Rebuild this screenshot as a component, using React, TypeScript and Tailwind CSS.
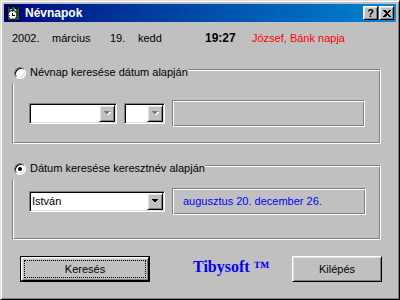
import React from 'react';

const raised =
  'border border-t-white border-l-white border-b-black border-r-black shadow-[inset_1px_1px_0_#dfdfdf,inset_-1px_-1px_0_#808080]';
const sunken =
  'border border-t-[#808080] border-l-[#808080] border-b-white border-r-white shadow-[inset_1px_1px_0_#000,inset_-1px_-1px_0_#dfdfdf]';
const etched =
  'border border-t-[#808080] border-l-[#808080] border-b-white border-r-white shadow-[inset_1px_1px_0_#fff,inset_-1px_-1px_0_#808080]';

const AppIcon = () => (
  <svg width="16" height="16" viewBox="0 0 16 16" shapeRendering="crispEdges">
    <path d="M2 1h2v2h2V1h4v2h2V1h2v14H2z" fill="#0b5f55" stroke="#000" strokeWidth="1" />
    <rect x="5" y="4" width="2" height="2" fill="#7fd0c0" />
    <rect x="9" y="4" width="2" height="2" fill="#7fd0c0" />
    <circle cx="7.5" cy="10" r="4.5" fill="#fff" stroke="#000" strokeWidth="1" shapeRendering="auto" />
    <rect x="7" y="6" width="1" height="1" fill="#e00000" />
    <rect x="7" y="13" width="1" height="1" fill="#e00000" />
    <rect x="4" y="10" width="1" height="1" fill="#e00000" />
    <rect x="11" y="10" width="1" height="1" fill="#e00000" />
    <rect x="7" y="8" width="1" height="3" fill="#000" />
    <rect x="8" y="10" width="2" height="1" fill="#000" />
  </svg>
);

const Arrow = ({ disabled }: { disabled?: boolean }) => (
  <div className={`w-[16px] h-full flex items-center justify-center ${raised} bg-[#c0c0c0]`}>
    <svg width="8" height="5" viewBox="0 0 8 5" shapeRendering="crispEdges">
      {disabled && <path d="M1 1h7L4.5 4.5z" fill="#fff" />}
      <path d="M0 0h7L3.5 3.5z" fill={disabled ? '#808080' : '#000'} />
    </svg>
  </div>
);

const Combo = ({ className, value, disabled }: { className: string; value?: string; disabled?: boolean }) => (
  <div className={`flex h-[21px] p-[1px] bg-white ${sunken} ${className}`}>
    <div className="flex-1 leading-[17px] text-[11px] pl-[1px] overflow-hidden">{value}</div>
    <Arrow disabled={disabled} />
  </div>
);

const Radio = ({ checked }: { checked?: boolean }) => (
  <div
    className={`w-[12px] h-[12px] rounded-full bg-white flex items-center justify-center border border-t-[#808080] border-l-[#808080] border-b-white border-r-white shadow-[inset_1px_1px_0_#000,inset_-1px_-1px_0_#dfdfdf]`}
  >
    {checked && <div className="w-[4px] h-[4px] bg-black rounded-full" />}
  </div>
);

const Group = ({
  label,
  checked,
  labelWidth,
  children,
}: {
  label: string;
  checked?: boolean;
  labelWidth: string;
  children: React.ReactNode;
}) => (
  <div className={`relative w-[369px] h-[75px] ${etched}`}>
    <div className={`absolute left-[-1px] top-[-8px] h-[21px] ${labelWidth} bg-[#c0c0c0] flex items-center`}>
      <div className="ml-[2px]">
        <Radio checked={checked} />
      </div>
      <span className="ml-[4px] text-[11px] whitespace-nowrap">{label}</span>
    </div>
    {children}
  </div>
);

export default function App() {
  return (
    <div className="w-[400px] h-[300px] bg-[#c0c0c0] border border-t-[#dfdfdf] border-l-[#dfdfdf] border-b-black border-r-black shadow-[inset_1px_1px_0_#fff,inset_-1px_-1px_0_#808080] p-[3px] font-['Liberation_Sans',Arial,sans-serif] text-[11px] text-black flex flex-col">
      {/* title bar */}
      <div className="h-[18px] flex items-center bg-linear-to-r from-[#000080] to-[#1084d0]">
        <div className="ml-[1px]">
          <AppIcon />
        </div>
        <span className="ml-[4px] text-white font-bold text-[12px]">Névnapok</span>
        <div className="flex-1" />
        <div className={`w-[15px] h-[14px] flex items-center justify-center bg-[#c0c0c0] ${raised}`}>
          <span className="font-bold text-[11px] leading-none">?</span>
        </div>
        <div className={`ml-[1px] mr-[2px] w-[15px] h-[14px] flex items-center justify-center bg-[#c0c0c0] ${raised}`}>
          <svg width="8" height="7" viewBox="0 0 8 7" shapeRendering="crispEdges">
            <path d="M0 0h2l2 2 2-2h2L5 3.5 8 7H6L4 5 2 7H0l3-3.5z" fill="#000" />
          </svg>
        </div>
      </div>

      <div className="flex-1 pl-[8px] flex flex-col">
        {/* date row */}
        <div className="mt-[9px] flex leading-[14px] whitespace-nowrap">
          <span className="w-[40px]">2002.</span>
          <span className="w-[58px]">március</span>
          <span className="w-[28px]">19.</span>
          <span className="w-[67px]">kedd</span>
          <span className="w-[47px] font-bold text-[12px]">19:27</span>
          <span className="text-[#ff0000]">József, Bánk napja</span>
        </div>

        <div className="mt-[24px]">
          <Group label="Névnap keresése dátum alapján" labelWidth="w-[176px]">
            <div className="mt-[30px] ml-[16px] flex items-center">
              <Combo className="w-[88px]" disabled />
              <Combo className="ml-[7px] w-[41px]" disabled />
              <div className={`ml-[7px] w-[193px] h-[27px] ${etched}`} />
            </div>
          </Group>
        </div>

        <div className="mt-[21px]">
          <Group label="Dátum keresése keresztnév alapján" checked labelWidth="w-[193px]">
            <div className="mt-[22px] ml-[16px] flex items-center">
              <Combo className="w-[136px]" value="István" />
              <div className={`ml-[7px] w-[194px] h-[27px] ${etched} flex items-center pl-[10px] text-[#0000ff]`}>
                augusztus 20. december 26.
              </div>
            </div>
          </Group>
        </div>

        {/* buttons */}
        <div className="mt-[15px] flex items-center">
          <div className="ml-[8px] w-[130px] h-[26px] border border-black">
            <div className={`h-full p-[2px] ${raised}`}>
              <div className="h-full border border-dotted border-black flex items-center justify-center">
                Keresés
              </div>
            </div>
          </div>
          <span className="ml-[43px] w-[99px] mb-[4px] font-['Liberation_Serif','Times_New_Roman',serif] font-bold text-[16px] text-[#0000ff] whitespace-nowrap">
            Tibysoft ™
          </span>
          <div className={`w-[90px] h-[26px] flex items-center justify-center ${raised}`}>Kilépés</div>
        </div>
      </div>
    </div>
  );
}
